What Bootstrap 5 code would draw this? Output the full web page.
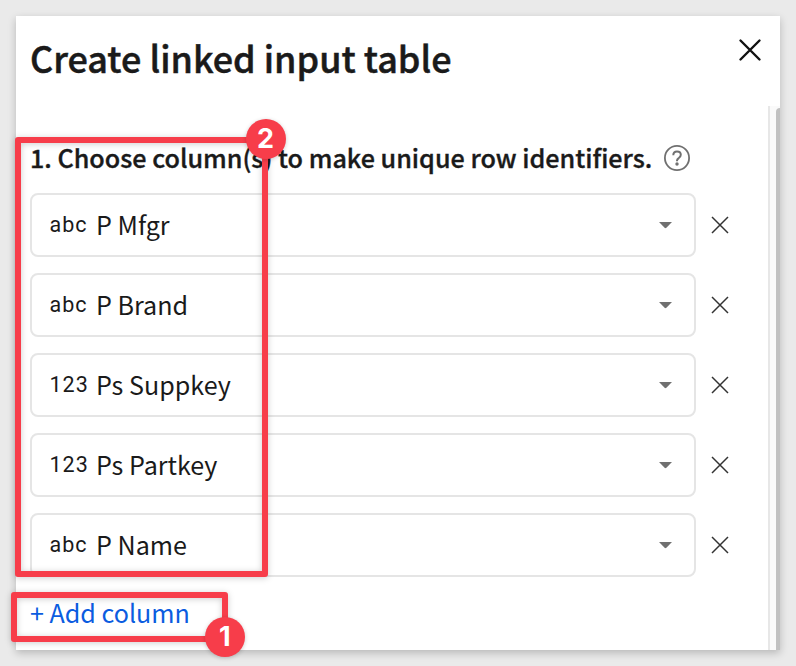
<!DOCTYPE html>
<html lang="en">
<head>
<meta charset="utf-8">
<meta name="viewport" content="width=device-width, initial-scale=1">
<title>Create linked input table</title>
<link href="https://cdn.jsdelivr.net/npm/bootstrap@5.3.0/dist/css/bootstrap.min.css" rel="stylesheet">
<style>
  body { background: #eaeaea; color: #1a1a1a; font-family: "Noto Sans CJK SC", sans-serif; font-size: 25.1px; line-height: 36px; height: 666px; overflow: hidden; }
  .dialog-panel { width: 764px; height: 634px; margin: 16px; box-shadow: 0 3px 8px rgba(0,0,0,.22); }
  .dialog-head { height: 90px; padding: 15px 18px 0 14px; }
  .dialog-title { font-size: 35.95px; line-height: 52px; font-weight: 500; -webkit-text-stroke: .5px #1a1a1a; }
  .close-x { margin-top: 7px; }
  .dialog-main { padding: 33px 32px 0 14px; }
  .step-title { font-size: 25.15px; line-height: 36px; font-weight: 500; margin-bottom: 18px; gap: 12px; -webkit-text-stroke: .35px #1a1a1a; }
  .help-icon { margin-top: 2px; }
  .fields { gap: 16px; }
  .field-select { height: 64px; width: 666px; border: 2px solid #e5e5e5; border-radius: 8px; padding: 0 22px 0 17.5px; }
  .field-label { margin-top: -2px; }
  .type-tag { font-family: Roboto, sans-serif; font-size: 21.5px; letter-spacing: 1px; width: 46.5px; margin-top: -1px; }
  .field-row { gap: 15px; }
  .add-link { color: #0b5ce0; margin-top: 17px; }
  .scroll-track { width: 12px; background: #fafafa; border-left: 2px solid #e7e7e7; padding-top: 2px; }
  .scroll-thumb { width: 4px; background: #c1c1c1; border-top-left-radius: 5px; }
  .callout { border: 6px solid #f73d4a; border-radius: 3px; filter: drop-shadow(0 1px 3px rgba(0,0,0,.2)); }
  .callout-columns { left: 15px; top: 137px; width: 252.5px; height: 440px; }
  .callout-add { left: 11px; top: 592px; width: 217px; height: 50px; }
  .callout-num { width: 40px; height: 40px; background: #f73d4a; color: #fff; font: 700 27px/40px Inter, sans-serif; box-shadow: 0 1px 4px rgba(0,0,0,.2); }
  .num-two { left: 245.5px; top: 119px; }
  .num-one { left: 204.8px; top: 617px; }
</style>
<script src="https://cdn.jsdelivr.net/npm/bootstrap@5.3.0/dist/js/bootstrap.bundle.min.js"></script>
</head>
<body class="position-relative">
<svg class="d-none">
  <symbol id="remove" viewBox="0 0 18 18"><path d="M1 1l16 16M17 1L1 17" fill="none" stroke="#333" stroke-width="1.5"/></symbol>
  <symbol id="caret" viewBox="0 0 13 7"><path d="M0 0h13L7.4 5.8q-.9.9-1.8 0z" fill="#707070"/></symbol>
</svg>
<div class="dialog-panel bg-white d-flex flex-column">
  <header class="dialog-head d-flex justify-content-between align-items-start">
    <h1 class="dialog-title mb-0"><span>Create linked input table</span></h1>
    <svg class="close-x" width="24" height="24" viewBox="0 0 24 24"><path d="M2.5 2.5l19 19M21.5 2.5l-19 19" fill="none" stroke="#111" stroke-width="2.4" stroke-linecap="round"/></svg>
  </header>
  <div class="d-flex flex-grow-1">
    <main class="dialog-main flex-grow-1">
      <h2 class="step-title d-flex align-items-center text-nowrap"><span>1. Choose column(s) to make unique row identifiers.</span>
        <svg class="help-icon" width="26" height="26" viewBox="0 0 26 26" fill="none" stroke="#707070"><circle cx="13" cy="13" r="12.1" stroke-width="1.8"/><path d="M9.3 10.2C9.3 7.7 10.8 6.4 13 6.4s3.8 1.3 3.8 3.4c0 1.8-1 2.5-2.1 3.3-1.2.8-1.7 1.4-1.7 2.7v.5" stroke-width="2"/><circle cx="13" cy="19" r="1.7" fill="#707070" stroke="none"/></svg>
      </h2>
      <div class="fields d-flex flex-column">
        <div class="field-row d-flex align-items-center"><div class="field-select d-flex align-items-center"><span class="type-tag">abc</span><span class="field-label">P Mfgr</span><svg class="ms-auto" width="13" height="7"><use href="#caret"/></svg></div><svg width="18" height="18"><use href="#remove"/></svg></div>
        <div class="field-row d-flex align-items-center"><div class="field-select d-flex align-items-center"><span class="type-tag">abc</span><span class="field-label">P Brand</span><svg class="ms-auto" width="13" height="7"><use href="#caret"/></svg></div><svg width="18" height="18"><use href="#remove"/></svg></div>
        <div class="field-row d-flex align-items-center"><div class="field-select d-flex align-items-center"><span class="type-tag">123</span><span class="field-label">Ps Suppkey</span><svg class="ms-auto" width="13" height="7"><use href="#caret"/></svg></div><svg width="18" height="18"><use href="#remove"/></svg></div>
        <div class="field-row d-flex align-items-center"><div class="field-select d-flex align-items-center"><span class="type-tag">123</span><span class="field-label">Ps Partkey</span><svg class="ms-auto" width="13" height="7"><use href="#caret"/></svg></div><svg width="18" height="18"><use href="#remove"/></svg></div>
        <div class="field-row d-flex align-items-center"><div class="field-select d-flex align-items-center"><span class="type-tag">abc</span><span class="field-label">P Name</span><svg class="ms-auto" width="13" height="7"><use href="#caret"/></svg></div><svg width="18" height="18"><use href="#remove"/></svg></div>
      </div>
      <a class="add-link d-inline-block text-decoration-none" href="#">+ Add column</a>
    </main>
    <div class="scroll-track d-flex justify-content-end"><div class="scroll-thumb"></div></div>
  </div>
</div>
<div class="callout callout-columns position-absolute"></div>
<div class="callout callout-add position-absolute"></div>
<div class="callout-num num-two position-absolute rounded-circle text-center">2</div>
<div class="callout-num num-one position-absolute rounded-circle text-center">1</div>
</body>
</html>
